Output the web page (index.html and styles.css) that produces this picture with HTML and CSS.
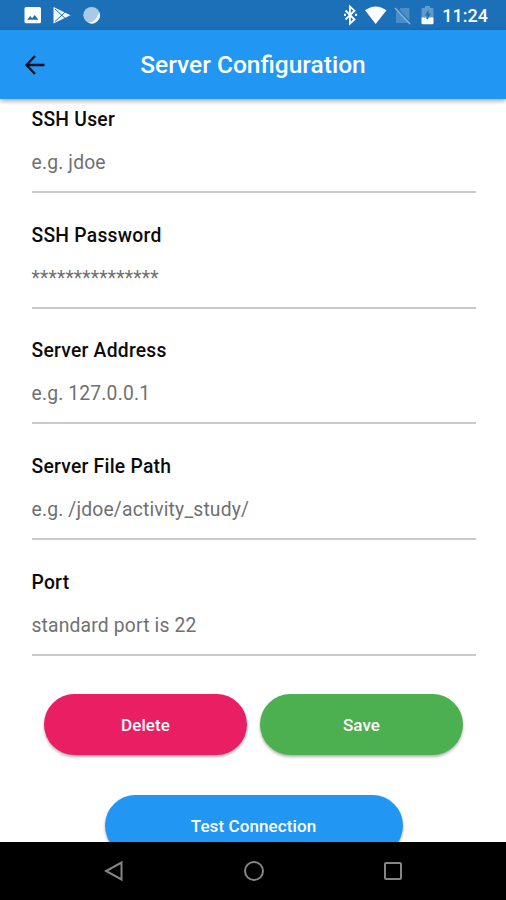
FILE: index.html
```html
<!DOCTYPE html>
<html lang="en">
<head>
<meta charset="utf-8">
<title>Server Configuration</title>
<link rel="stylesheet" href="styles.css">
</head>
<body>
<div class="screen">
  <div class="status">
    <svg class="status-left" width="80" height="30" viewBox="0 0 80 30">
      <path fill="#fff" fill-rule="evenodd" d="M2 7h13.500q1.500 0 1.500 1.500v13.300q0 1.500-1.500 1.500H2q-1.500 0-1.500-1.500V8.500Q.5 7 2 7zM3.200 19.800h11.200l-3.600-4.900-2.700 3.400-1.900-2.300z"/>
      <path fill="#f1f7fc" d="M29.500 7 46.500 15.200 29.500 23.500z"/>
      <path d="M31 9 41 18.200M31 21.500 41 12.200" stroke="#1b70b7" stroke-width="1"/>
      <circle cx="67.600" cy="15.200" r="8.300" fill="#a9c9e4"/>
      <path d="M75.300 12a8.300 8.300 0 0 1-12 10.300q8 1 12-10.300z" fill="#edf5fb"/>
    </svg>
    <div class="status-right">
      <svg width="92" height="30" viewBox="0 0 92 30">
        <path d="m2.500 10.500 9 9-4.600 4.200V6.500l4.600 4.200-9 8.800" fill="none" stroke="#fff" stroke-width="1.800"/>
        <path fill="#fff" d="M1 13.800h2v2.200H1zM12 13.800h2v2.200h-2z"/>
        <path d="M22 10.300Q32.600 2.500 43.500 10.300L32.700 24z" fill="#fff"/>
        <path d="M57.500 8H66.500V23H53V12.500z" fill="#4b8dc6"/>
        <path d="m53.500 8 14 15" stroke="#1b70b7" stroke-width="1.500"/>
        <path d="m52 8 15 16" stroke="#8bb5da" stroke-width="1.400"/>
        <path d="M82 6h5v2h2.500q1 0 1 1v9H78.500V9q0-1 1-1H82z" fill="#5f9acd"/>
        <path d="m85.500 9.500-3.500 6h2.300v4l3.500-6h-2.300z" fill="#1b70b7"/>
        <path d="M78.500 17.500h4l1.800 2 1.800-2h4.400V23q0 1.300-1.300 1.300h-9.400q-1.300 0-1.300-1.300z" fill="#fff"/>
      </svg>
      <span class="clock">11:24</span>
    </div>
  </div>
  <header class="appbar">
    <svg class="back" width="20" height="20" viewBox="0 0 20 20"><path d="M19.500 10H2M10 1 1.500 10 10 19" fill="none" stroke="#06121d" stroke-width="2.300"/></svg>
    <h1 class="title">Server Configuration</h1>
  </header>
  <main class="content">
    <div class="field"><div class="label">SSH User</div><div class="hint">e.g. jdoe</div></div>
    <div class="field"><div class="label">SSH Password</div><div class="hint">***************</div></div>
    <div class="field"><div class="label">Server Address</div><div class="hint">e.g. 127.0.0.1</div></div>
    <div class="field"><div class="label">Server File Path</div><div class="hint">e.g. /jdoe/activity_study/</div></div>
    <div class="field"><div class="label">Port</div><div class="hint">standard port is 22</div></div>
    <div class="actions">
      <div class="button delete">Delete</div>
      <div class="button save">Save</div>
    </div>
    <div class="button test">Test Connection</div>
  </main>
  <nav class="navbar">
    <svg width="20" height="22" viewBox="0 0 20 22"><path d="M17.500 2.500v17L2 11z"/></svg>
    <svg width="22" height="22" viewBox="0 0 22 22"><circle cx="11" cy="11" r="9"/></svg>
    <svg width="20" height="22" viewBox="0 0 20 22"><rect x="2" y="3" width="16" height="16" rx="1"/></svg>
  </nav>
</div>
</body>
</html>
```

FILE: styles.css
```css
* { box-sizing: border-box; }
body { margin: 0; font-family: Roboto, "Liberation Sans", sans-serif; background: #fff; }
.screen { width: 506px; height: 900px; display: flex; flex-direction: column; overflow: hidden; }
.status { flex: none; height: 30px; background: #1b70b7; display: flex; justify-content: space-between; padding: 0 18px 0 24px; }
.status svg { display: block; }
.status-right { display: flex; gap: 7px; }
.clock { color: #fff; font-size: 18px; font-weight: 500; line-height: 32px; white-space: nowrap; }
.appbar { flex: none; height: 69px; background: #2196f3; display: grid; grid-template-columns: 80px 1fr 80px; align-items: center; box-shadow: 0 2px 5px rgba(0, 0, 0, 0.35); z-index: 1; }
.back { margin-left: 25px; }
.title { margin: 1px 0 0; text-align: center; color: #fff; font-size: 24.500px; font-weight: 500; line-height: 28px; white-space: nowrap; }
.content { flex: 1; min-height: 0; overflow: hidden; padding: 8.750px 30px 0 31.500px; display: flex; flex-direction: column; }
.field { flex: none; height: 85px; margin-bottom: 30.750px; border-bottom: 2px solid #cacaca; }
.label { font-size: 19.300px; font-weight: 500; line-height: 24px; color: #0c0c0c; letter-spacing: 0.25px; }
.hint { margin-top: 19px; font-size: 19.300px; line-height: 24px; color: #707070; letter-spacing: 0.17px; }
.actions { flex: none; display: flex; gap: 13px; padding: 0 13px 0 12.500px; margin-top: 7.250px; margin-bottom: 40px; }
.button { flex: none; height: 61px; border-radius: 31px; color: #fff; font-size: 17px; font-weight: 500; line-height: 62px; letter-spacing: 0.1px; text-align: center; box-shadow: 0 2px 3px rgba(0, 0, 0, 0.3); }
.actions .button { flex: 1; }
.delete { background: #e91e63; }
.save { background: #4caf50; }
.test { width: 298px; margin-left: 73px; background: #2196f3; }
.navbar { flex: none; height: 58px; background: #000; display: flex; align-items: center; justify-content: space-between; padding: 0 103px 0 104px; z-index: 1; }
.navbar svg { fill: none; stroke: #858585; stroke-width: 2; }
```
